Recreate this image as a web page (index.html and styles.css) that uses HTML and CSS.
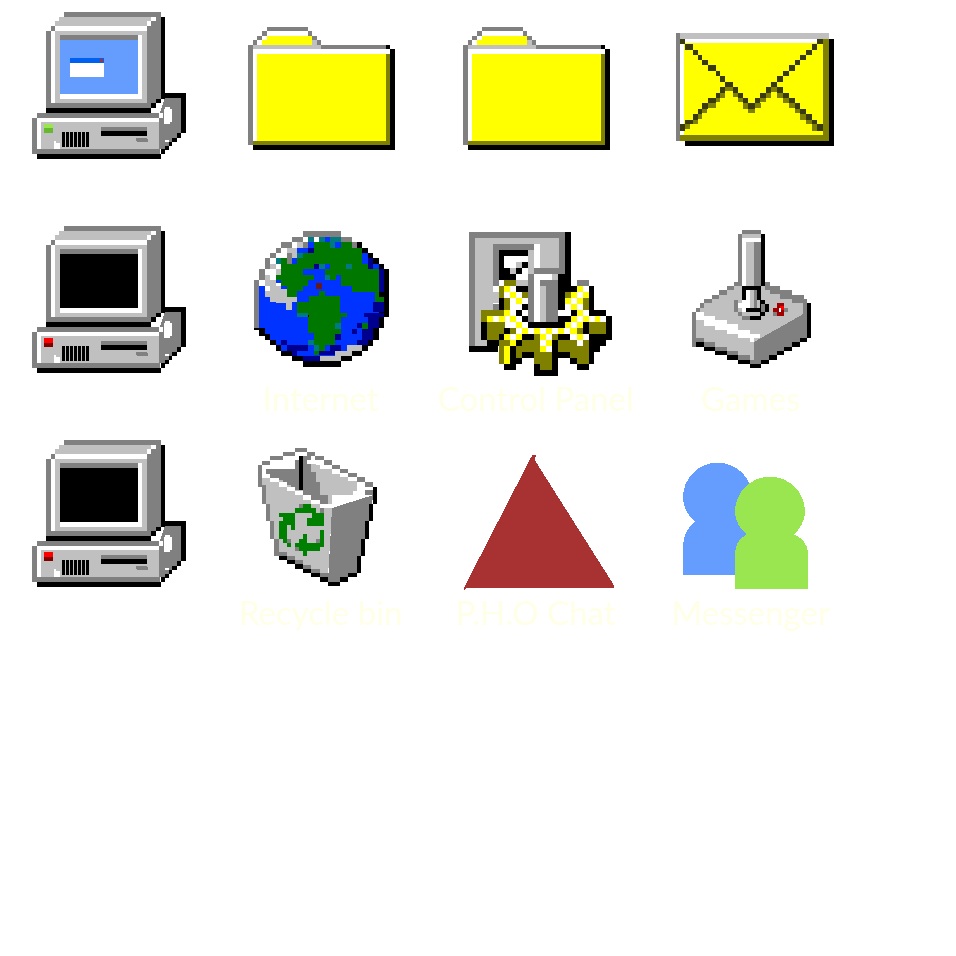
FILE: index.html
```html
<!DOCTYPE html>
<html>
<head>
  <meta charset="utf-8">
  <title>Desktop</title>
  <link rel="stylesheet" href="styles.css">
</head>
<body>
  <!-- computer drawn once, the screen and the lamp differ per copy -->
  <svg class="defs" width="0" height="0">
    <symbol id="pc" viewBox="-30 0 570 510">
      <path class="bk" d="M422 50h13v246h-28v14h-15v14h-314v14h314v-14h15v-14h15z"/>
      <path class="gr" d="M132 36H422V296H407V310H392V324H78V92H92V78H105V64H118V50H132Z"/>
      <path class="si" d="M132 51H392V64H380V78H105V64H118V51Z"/>
      <path class="wh" d="M392 50h15v14h-15zM380 64h12v14h-12zM105 78H380V92H105V310H92V92H105Z"/>
      <path class="si" d="M105 92H380V310H105Z"/>
      <path class="gr" d="M120 105H354V120H120Z"/>
      <path class="wh" d="M354 105H366V296H120V282H354Z"/>
      <path class="bk" d="M435 279H498V399H484V413H471V427H457V437H447V450H435V462H422V476H51V462H422V338H435Z"/>
      <path class="gr" d="M36 353H50V338H420L435 293H484V399H471V413H457V427H447V437H435V448H420V462H36Z"/>
      <path class="wh" d="M50 353H417V340H430V354H417V366H64V448H50Z"/>
      <path class="si" d="M64 366H417V448H64Z"/>
      <path class="wh" d="M435 322H450V328H457V366H450V372H432V328H435ZM435 420H447V426H435Z"/>
      <path class="wh" d="M102 423H108V429H120V447H102Z"/>
      <path class="bk" d="M126 396h8v44h-8zM138 396h8v44h-8zM150 396h8v44h-8zM162 396h8v44h-8zM174 396h8v44h-8zM186 396h8v44h-8zM198 396h9v44h-9z"/>
      <path class="gr" d="M243 381H381V393H243ZM348 414H381V417H384V426H351V423H348Z"/>
      <path class="bk" d="M243 393H381V408H243Z"/>
    </symbol>
    <symbol id="folder" viewBox="-15 -30 570 510">
      <path class="bk" d="M468 105H480V118H495V420H69V405H480V118H468Z"/>
      <path class="gr" d="M111 51H234V63H246V78H261V90H273V105H468V118H69V405H54V105H69V90H81V78H96V63H111Z"/>
      <path class="wh" d="M111 63H234V78H111V90H96V105H81V90H96V78H111Z"/>
      <path class="si" d="M69 105H273V118H69ZM246 90H261V105H246Z"/>
      <path class="wh" d="M69 118H468V132H81V393H69Z"/>
      <path class="ol" d="M468 132H480V405H69V393H468Z"/>
      <path class="ye" d="M111 78H246V105H96V90H111ZM81 132H468V393H81Z"/>
    </symbol>
  </svg>

  <div class="desktop">
    <div class="item">
      <svg class="icon" viewBox="-30 0 570 510">
        <use href="#pc" x="-30" y="0" width="570" height="510"/>
        <path class="sc" d="M120 120H354V282H120Z"/>
        <path class="wh" d="M150 189H252V231H150Z"/>
        <path fill="#0060f0" d="M150 174H252V189H150Z"/>
        <path fill="#a83030" d="M240 178H250V186H240Z"/>
        <path fill="#99e650" d="M72 372H99V385H72Z"/>
        <path fill="#66b82e" d="M72 385H99V399H72Z"/>
      </svg>
    </div>
    <div class="item">
      <svg class="icon" viewBox="-15 -30 570 510"><use href="#folder" x="-15" y="-30" width="570" height="510"/></svg>
    </div>
    <div class="item">
      <svg class="icon" viewBox="-15 -30 570 510"><use href="#folder" x="-15" y="-30" width="570" height="510"/></svg>
    </div>
    <div class="item">
      <svg class="icon" viewBox="-15 -60 570 510">
        <path class="bk" d="M507 57H522V378H75V363H507Z"/>
        <path class="si" d="M48 39H507V57H48Z"/>
        <path class="gr" d="M48 39H60V363H48Z"/>
        <path class="wh" d="M60 57H475V69H72V312H60Z"/>
        <path class="ol" d="M490 57H507V363H60V345H490Z"/>
        <path class="ye" d="M72 69H490V345H72V312H72Z"/>
        <path class="ol" d="M75 312h15v15h-15zM99 300h15v12h-15zM114 282h12v15h-12zM126 267h15v12h-15zM144 249h24v15h-24zM168 234h12v12h-12zM180 219h15v15h-15zM195 201h24v12h-24zM219 219h15v12h-15zM234 234h15v12h-15zM249 249h15v18h-15zM264 267h21v12h-21zM285 249h18v15h-18zM300 234h18v12h-18zM318 219h15v15h-15zM333 201h18v15h-18zM351 219h18v15h-18zM369 234h18v15h-18zM387 249h18v15h-18zM405 267h15v12h-15zM420 282h18v18h-18zM438 300h18v12h-18zM456 312h15v21h-15z"/>
        <path class="dk" d="M60 57h15v15h-15zM75 72h24v18h-24zM99 90h15v15h-15zM114 105h12v15h-12zM126 120h18v15h-18zM144 135h24v18h-24zM168 153h12v15h-12zM180 168h15v18h-15zM195 186h24v15h-24zM219 201h15v18h-15zM234 219h15v15h-15zM249 234h15v15h-15zM264 249h21v18h-21zM471 57h18v15h-18zM456 72h15v18h-15zM438 90h18v15h-18zM420 105h18v15h-18zM405 120h15v15h-15zM387 135h18v18h-18zM369 153h18v15h-18zM351 168h18v18h-18zM333 186h18v15h-18zM318 201h15v18h-15zM300 219h18v15h-18zM285 234h15v15h-15zM60 312h15v21h-15zM75 300h24v12h-24zM99 282h15v18h-15zM114 267h12v15h-12zM126 249h18v18h-18zM144 234h24v15h-24zM168 219h12v15h-12zM180 201h15v18h-15zM351 201h18v18h-18zM369 219h18v15h-18zM387 234h18v15h-18zM405 249h15v18h-15zM420 267h18v15h-18zM438 282h18v18h-18zM456 300h15v12h-15zM471 312h18v21h-18z"/>
      </svg>
    </div>

    <div class="item">
      <svg class="icon" viewBox="-30 0 570 510">
        <use href="#pc" x="-30" y="0" width="570" height="510"/>
        <path class="bk" d="M120 120H354V282H120Z"/>
        <path fill="#ff0000" d="M72 372H99V386H72Z"/>
        <path fill="#800000" d="M72 386H99V399H72Z"/>
      </svg>
    </div>
    <div class="item">
      <svg class="icon" viewBox="-45 -18 570 510">
        <path class="bk" d="M189 33H303V50H337V66H367V83H384V99H400V115H416V132H432V148H447V292H432V325H416V360H400V379H384V392H367V408H337V424H303V440H189V424H155V408H123V392H107V375H90V360H74V347H58V330H42V180H58V148H74V115H90V99H107V83H123V66H155V50H189Z"/>
        <path class="gr" d="M189 33H303V50H337V66H352V83H337V66H303V50H189V66H155V83H123V99H107V115H90V148H74V180H58V325H42V180H58V148H74V115H90V99H107V83H123V66H155V50H189Z"/>
        <path fill="#0033ff" d="M189 50H303V66H337V83H352V99H384V115H400V132H416V292H400V325H384V360H367V375H352V392H337V408H303V424H189V408H155V392H123V375H107V360H90V343H74V325H58V180H74V148H90V115H107V99H123V83H155V66H189Z"/>
        <path fill="#000090" d="M416 148H432V215H416ZM400 245H432V275H400ZM372 280H432V292H416V325H384V292H372ZM367 325H400V360H384V375H352V360H367ZM123 360H140V375H123ZM140 375H205V392H140ZM270 375H303V392H270ZM189 408H240V424H189ZM155 392H172V408H155ZM238 392H285V405H238ZM384 115H400V148H384ZM284 342H303V360H284ZM336 327H352V342H336ZM350 310H367V325H350ZM205 83H222V99H205ZM222 132H238V148H222ZM270 132H285V148H270ZM303 132H319V165H303ZM187 375H205V392H187Z"/>
        <path fill="#007800" d="M222 66H270V83H303V66H337V83H367V132H384V148H416V215H405V245H432V230H416V215H335V197H303V165H287V180H270V165H255V148H270V132H222V148H190V165H222V180H205V197H190V213H172V230H140V197H123V180H107V165H123V115H140V132H172V115H190V99H222Z"/>
        <path fill="#007800" d="M238 213H255V228H300V278H320V292H303V342H285V375H255V392H238V405H222V392H238V375H222V340H205V278H172V245H206V228H238ZM367 310H384V327H367Z"/>
        <path fill="#007a80" d="M205 50H222V66H205ZM238 50H254V66H238ZM270 50H303V66H285V83H270ZM172 99H190V115H172ZM107 115H123V132H107ZM238 132H255V148H238ZM319 132H336V148H319ZM255 165H270V180H255ZM172 278H205V292H172ZM285 310H303V327H285ZM205 360H222V375H205ZM222 375H238V392H222Z"/>
        <path class="wh" d="M190 50H205V66H190ZM222 50H238V66H222ZM155 66H172V99H123V83H155ZM107 99H140V115H107ZM90 115H107V132H90ZM107 132H123V148H107ZM74 148H107V180H90V165H74ZM58 180H74V197H58ZM74 197H90V213H74ZM107 190H123V207H107Z"/>
        <path class="si" d="M172 66H190V83H172ZM140 83H172V99H140ZM155 99H172V115H155ZM90 132H107V148H90ZM107 148H123V165H107ZM74 165H90V180H74ZM74 180H107V197H123V207H140V230H172V245H155V270H138V250H107V245H90V230H74V213H90V197H74ZM320 375H367V392H335V408H284V392H320ZM240 408H303V424H240Z"/>
        <path class="gr" d="M190 66H205V83H190ZM140 99H155V132H140Z"/>
        <path fill="#661a1a" d="M228 190H246V207H228Z"/>
        <path class="bk" d="M205 285H208V292H205Z"/>
      </svg>
      <span class="label">Internet</span>
    </div>
    <div class="item">
      <svg class="icon" viewBox="30 -18 570 510">
        <path class="bk" d="M405 36H423V180H405ZM117 378H205V396H117Z"/>
        <path class="gr" d="M117 36H405V162H387V54H135V378H117Z"/>
        <path class="si" d="M135 54H387V162H190V270H171V360H171V378H135Z"/>
        <path class="si" d="M190 216H207V250H190Z"/>
        <path class="gr" d="M190 72H330V90H207V198H190ZM188 252H207V270H188Z"/>
        <path class="bk" d="M207 90H312V108H222V180H207Z"/>
        <path class="wh" d="M222 108H294V162H222ZM312 72H330V144H312ZM189 198H207V216H189Z"/>
        <path class="si" d="M294 90H312V162H294ZM240 144H258V162H240ZM258 126H276V144H258Z"/>
        <path class="bk" d="M276 126H294V144H276ZM258 144H276V162H258ZM222 144H240V162H222ZM222 162H240V180H222ZM240 162H258V180H240Z"/>
        <path class="gr" d="M312 144H405V162H330V180H312Z"/>
        <path class="wh" d="M312 162H366V180H312Z"/>
        <path class="si" d="M366 162H385V180H366ZM258 180H294V198H258Z"/>
        <path class="gr" d="M294 162H312V306H294ZM348 198H385V306H348ZM330 180H385V198H330Z"/>
        <path class="si" d="M330 198H348V306H330Z"/>
        <path class="wh" d="M312 180H330V306H312Z"/>
        <path class="gr" d="M441 180H477V198H441Z"/>

        <!-- the gear, row by row -->
        <path class="bk" d="M385 162h38v36h-38zM258 198h36v18h-36zM384 198h57v18h-57zM477 198h15v18h-15zM477 216h15v18h-15zM385 216h20v18h-20zM207 234h15v36h-15zM385 234h20v36h-20zM477 234h15v36h-15zM276 252h18v18h-18zM258 270h18v18h-18zM423 270h18v18h-18zM477 270h51v18h-51zM276 288h18v18h-18zM385 288h38v18h-38zM528 288h18v72h-18zM294 306h111v18h-111zM153 306h18v54h-18zM459 306h19v36h-19zM222 324h18v18h-18zM207 342h15v18h-15zM276 342h36v18h-36zM384 342h36v18h-36zM478 342h50v18h-50zM171 360h36v18h-36zM258 360h18v18h-18zM366 360h18v90h-18zM478 360h50v18h-50zM240 378h18v36h-18zM478 378h32v18h-32zM276 396h36v18h-36zM384 396h36v18h-36zM478 396h14v36h-14zM240 414h36v18h-36zM420 414h22v18h-22zM222 432h36v18h-36zM312 432h18v36h-18zM442 432h36v18h-36zM330 450h54v18h-54z"/>
        <path class="ol" d="M222 180h36v18h-36zM207 198h15v36h-15zM276 216h18v18h-18zM405 216h18v18h-18zM222 234h18v36h-18zM459 234h18v36h-18zM153 270h69v18h-69zM153 288h18v18h-18zM171 306h54v18h-54zM478 306h50v36h-50zM171 324h51v18h-51zM240 324h18v18h-18zM441 324h18v18h-18zM171 342h36v18h-36zM312 342h18v18h-18zM366 342h18v18h-18zM207 360h33v18h-33zM276 360h54v18h-54zM384 360h57v18h-57zM459 360h19v18h-19zM207 378h15v54h-15zM258 378h72v18h-72zM384 378h94v18h-94zM258 396h18v18h-18zM312 396h54v36h-54zM420 396h58v18h-58zM442 414h36v18h-36zM330 432h36v18h-36z"/>
        <path class="wh" d="M240 198h18v18h-18zM222 216h18v18h-18zM258 216h18v18h-18zM240 234h18v18h-18zM276 234h18v18h-18zM441 216h18v18h-18zM459 198h18v18h-18zM423 234h18v18h-18zM240 252h36v18h-36zM405 252h18v36h-18zM441 252h18v18h-18zM240 270h18v18h-18zM276 270h18v18h-18zM459 270h18v18h-18zM189 288h18v18h-18zM225 288h15v18h-15zM258 288h18v18h-18zM441 288h18v18h-18zM477 288h18v18h-18zM510 288h18v18h-18zM225 306h33v18h-33zM276 306h18v18h-18zM423 306h18v18h-18zM258 324h18v18h-18zM294 324h18v18h-18zM330 324h18v18h-18zM366 324h18v18h-18zM402 324h18v18h-18zM240 342h18v18h-18zM348 342h18v18h-18zM420 342h21v18h-21zM459 342h19v18h-19zM330 360h18v18h-18zM441 360h18v18h-18zM348 378h18v18h-18z"/>
        <path class="ye" d="M222 198h18v18h-18zM240 216h18v18h-18zM258 234h18v18h-18zM222 270h18v18h-18zM171 288h18v18h-18zM207 288h18v18h-18zM240 288h18v18h-18zM258 306h18v18h-18zM276 324h18v18h-18zM312 324h18v18h-18zM348 324h18v18h-18zM384 324h18v18h-18zM420 324h21v18h-21zM222 342h18v18h-18zM258 342h18v18h-18zM330 342h18v18h-18zM441 342h18v18h-18zM240 360h18v18h-18zM348 360h18v18h-18zM330 378h18v18h-18zM222 378h18v54h-18zM441 198h18v18h-18zM423 216h18v18h-18zM459 216h18v18h-18zM405 234h18v18h-18zM441 234h18v18h-18zM423 252h18v18h-18zM441 270h18v18h-18zM423 288h18v18h-18zM459 288h18v18h-18zM495 288h15v18h-15zM405 306h18v18h-18zM441 306h18v18h-18z"/>
      </svg>
      <span class="label">Control Panel</span>
    </div>
    <div class="item">
      <svg class="icon" viewBox="-45 -18 570 510">
        <path class="si" d="M192 198H288V210H330V222H366V237H400V250H410V285L252 366 78 300V276H90V264H102V250H125V237H147V225H170V210H192Z"/>
        <path class="gr" d="M192 186H300V198H330V210H366V225H402V237H411V354H390V366H366V381H342V393H321V405H297V420H240V405H204V393H171V381H135V366H102V354H78V381H66V276H78V264H90V250H102V237H125V225H147V210H170V198H192ZM192 198V210H170V225H147V237H125V250H102V264H90V276H78V354H102V366H135V381H171V393H204V405H240V420H252V366L400 282V250H366V237H330V222H300V210H285V198Z" fill-rule="evenodd"/>
        <path class="si" d="M78 300L252 366V420H240V405H204V393H171V381H135V366H102V354H78Z"/>
        <path class="gr" d="M78 354h24v12h-24zM102 366h33v15h-33zM135 381h36v12h-36zM171 393h33v12h-33zM204 405h36v15h-36zM240 420h33v12h-33z"/>
        <path class="wh" d="M78 276H102V288H135V300H171V312H204V330H240V342H270V354H252V366H240V354H204V342H171V330H135V318H102V300H78Z"/>
        <path class="bk" d="M78 366h24v15h-24zM102 381h33v12h-33zM135 393h36v12h-36zM171 405h33v15h-33zM204 420h36v12h-36zM240 432h33v12h-33zM273 420h24v12h-24zM297 405h24v15h-24zM321 393h21v12h-21zM342 381h24v12h-24zM366 366h24v15h-24zM390 354h21v12h-21zM411 249h12v105h-12z"/>
        <path class="gr" d="M216 30H273V42H216ZM204 42H216V186H204Z"/>
        <path class="bk" d="M273 42H285V198H273Z"/>
        <path class="si" d="M216 42H273V54H216ZM228 66H252V198H228Z"/>
        <path class="wh" d="M216 54H273V66H228V198H216Z"/>
        <path class="gr" d="M252 66H273V198H252Z"/>
        <path class="bk" d="M216 198H272V210H228V240H216ZM262 210H272V240H262ZM270 240H285V252H296V276H285V288H272V300H240V288H270V276H228V264H270Z"/>
        <path class="wh" d="M228 210H240V252H252V264H228V276H216V264H204V250H216V240H228Z"/>
        <path class="si" d="M240 210H252V264H240Z"/>
        <path class="gr" d="M252 210H262V264H252ZM192 240H204V276H192ZM204 276H216V288H204ZM216 288H240V300H216ZM272 252H285V276H272Z"/>
        <path fill="#a00000" d="M321 250H342V288H321V276H309V264H321Z"/>
        <path fill="#ff0000" d="M330 258H342V270H330Z"/>
        <path class="wh" d="M327 264H333V276H327Z"/>
        <path class="gr" d="M309 276H321V288H309ZM342 264H354V276H342Z"/>
      </svg>
      <span class="label">Games</span>
    </div>

    <div class="item">
      <svg class="icon" viewBox="-30 0 570 510">
        <use href="#pc" x="-30" y="0" width="570" height="510"/>
        <path class="bk" d="M120 120H354V282H120Z"/>
        <path fill="#ff0000" d="M72 372H99V386H72Z"/>
        <path fill="#800000" d="M72 386H99V399H72Z"/>
      </svg>
    </div>
    <div class="item">
      <svg class="icon" viewBox="-15 -36 570 510">
        <path class="si" d="M96 115H200L306 204L294 411H270V400H243V388H219V375H195V360H171V348H147V297H132V243H120V192H108V141H96Z"/>
        <path class="gr" d="M306 204L430 165L418 240L406 300L394 350L382 399H354V411H330V426H294Z"/>
        <path class="gr" d="M195 24H231V36H255V48H282V60H306V75H330V87H354V99H381V111H405V126H430V165H405V126H381V111H354V99H330V87H306V75H282V60H255V48H231V36H195V48H159V60H120V75H96V135H108V192H120V243H132V297H147V336H171V348H195V360H219V375H243V387H270V399H294V411H306V426H294V411H270V399H243V387H219V375H195V360H171V348H132V297H120V243H108V192H96V141H84V75H96V63H120V48H159V36H195Z"/>
        <path class="gr" d="M120 87H195V60H207V150H183V135H159V120H120V102H108V87Z"/>
        <path class="si" d="M243 72H270V87H306V102H354V114H381V129H405V165H306V192H294V165H270V126H258V96H243Z"/>
        <path class="gr" d="M219 48H243V96H258V126H270V165H294V192H270V180H243V165H219Z"/>
        <path class="bk" d="M207 48H219V150H207Z"/>
        <path class="wh" d="M195 36H207V48H195ZM219 36H231V48H219ZM120 63H159V75H120ZM96 75H120V87H108V102H120V114H96ZM159 48H195V60H159ZM231 60H255V72H231ZM258 60H282V75H258ZM282 75H306V87H282ZM306 87H330V99H306ZM330 99H354V111H330ZM354 111H381V123H354ZM381 126H405V150H430V141H405V165H370V180H333V192H306V204H270V192H243V180H219V165H195V153H171V141H147V126H120V114H147V126H171V141H195V153H219V165H243V180H270V192H306V180H333V165H370V153H381Z"/>
        <path fill="#008000" d="M219 192h24v12h-24zM195 204h63v15h-63zM246 219h36v39h-36zM231 234h15v24h-15zM147 219h48v12h-48zM159 231h36v12h-36zM147 243h48v12h-48zM147 255h24v42h-24zM183 255h12v15h-12zM159 297h12v12h-12zM171 309h12v12h-12zM270 270h12v51h-12zM219 282h12v15h-12zM207 297h24v12h-24zM195 309h75v12h-75zM207 321h63v12h-63zM219 333h12v15h-12z"/>
        <path class="gr" d="M171 297H183V309H171ZM258 297H270V309H258ZM195 321H207V333H195ZM207 192H219V204H207ZM270 204H282V219H270Z"/>
        <path class="bk" d="M430 141h12v51h-12zM418 192h12v51h-12zM406 243h12v54h-12zM394 297h12v51h-12zM382 348h12v51h-12zM354 399h28v12h-28zM330 411h24v15h-24zM294 426h36v12h-36zM147 348h24v12h-24zM171 360h24v12h-24zM195 372h24v15h-24zM219 387h24v12h-24zM243 399h27v12h-27zM270 411h24v15h-24z"/>
      </svg>
      <span class="label">Recycle bin</span>
    </div>
    <div class="item">
      <svg class="icon" viewBox="-30 -36 570 510">
        <path class="tri" d="M243 52L248 45H258L254 60L492 436V443H52L42 450V443Z"/>
      </svg>
      <span class="label">P.H.O Chat</span>
    </div>
    <div class="item">
      <svg class="icon" viewBox="615 -36 570 510">
        <path class="buddy-a" d="M699 404V320C699 285 712 265 735 245C712 225 699 200 699 172A104 104 0 1 1 907 172V404Z"/>
        <path class="buddy-b" d="M855 446V340C855 315 868 295 890 283C868 265 855 240 855 215A105 105 0 1 1 1065 215C1065 240 1052 265 1032 283C1058 295 1074 315 1074 340V446Z"/>
      </svg>
      <span class="label">Messenger</span>
    </div>
  </div>
</body>
</html>
```
FILE: styles.css
```css
body {
  margin: 0;
  background: #fff;
  font-family: Lato, sans-serif;
}
.defs {
  position: absolute;
}
.desktop {
  display: grid;
  grid-template-columns: repeat(4, 190px);
  grid-auto-rows: 214px;
  column-gap: 25px;
  padding-left: 10px;
}
.item {
  display: flex;
  flex-direction: column;
  align-items: center;
}
.icon {
  display: block;
  width: 190px;
  height: 170px;
  shape-rendering: crispEdges;
}
.label {
  margin-top: -8px;
  padding-left: 2px;
  font-size: 33px;
  line-height: 44px;
  color: #ffffe8;
  white-space: nowrap;
}

/* the sixteen colour palette */
.bk { fill: #000; }
.gr { fill: #808080; }
.si { fill: #c0c0c0; }
.wh { fill: #fff; }
.ye { fill: #ff0; }
.ol { fill: #808000; }
.dk { fill: #3a3a12; }
.sc { fill: #659dff; }
.tri { fill: #a83232; }
.buddy-a { fill: #659dff; }
.buddy-b { fill: #99e650; }
```
